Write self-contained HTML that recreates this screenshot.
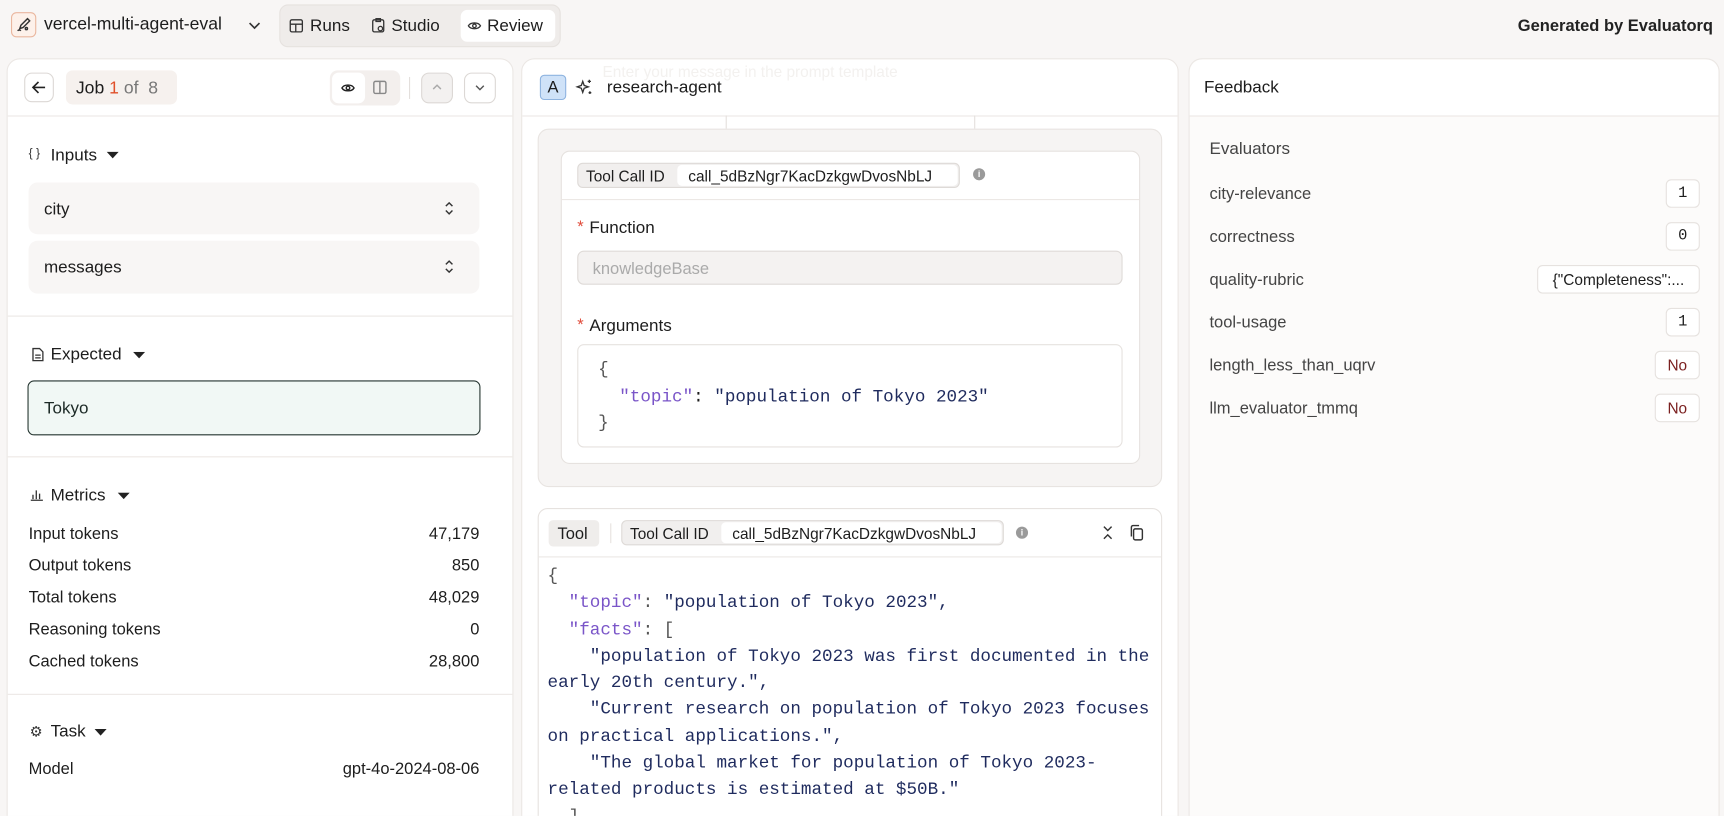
<!DOCTYPE html>
<html><head><meta charset="utf-8"><style>
*{box-sizing:border-box;margin:0;padding:0}
html,body{width:1724px;height:816px;overflow:hidden;background:#f8f6f5}
#w{position:absolute;left:0;top:0;width:1568px;height:742px;overflow:hidden;transform:scale(1.0995);transform-origin:0 0;font-family:"Liberation Sans",sans-serif;color:#1d1d1d;font-size:15px}
.a{position:absolute}
.mono{font-family:"Liberation Mono",monospace}
.panel{position:absolute;background:#fff;border:1px solid #ebe7e4;border-radius:12px}
.hline{position:absolute;height:1px;background:#ece8e5}
.t{position:absolute;line-height:1;white-space:nowrap}
.btn{position:absolute;border:1px solid #dcd8d5;border-radius:7px;background:#fff}
.k{color:#7a55c8}.s{color:#1f2b5e}.p{color:#555}
.badge{position:absolute;border:1px solid #e6e2df;border-radius:5px;background:#fff;height:26px;font-size:14px;line-height:24px;text-align:center}
.info{position:absolute;width:11px;height:11px;border-radius:50%;background:#9a9a9a;color:#fff;font-size:8px;line-height:11px;text-align:center;font-weight:bold}
</style></head><body><div id="w">
<!-- top bar -->
<div class="a" style="left:10px;top:11px;width:23px;height:23px;border:1px solid #eab79f;background:#fdf1ea;border-radius:5px"></div>
<svg class="a" style="left:13px;top:14px" width="17" height="17" viewBox="0 0 17 17" fill="none" stroke="#333" stroke-width="1.3"><path d="M12 3l2 2-6 6-3 1 1-3z"/><path d="M3 14c1-1 2-1 3 0"/><circle cx="11" cy="12" r="1"/></svg>
<div class="t" style="left:40px;top:15px;font-size:16px">vercel-multi-agent-eval</div>
<svg class="a" style="left:225px;top:17px" width="13" height="12" viewBox="0 0 13 12"><path d="M2 4l4.5 4.5L11 4" stroke="#333" stroke-width="1.5" fill="none"/></svg>
<div class="a" style="left:254px;top:4px;width:256px;height:39px;background:#efecea;border-radius:8px;border:1px solid #e6e2df"></div>
<svg class="a" style="left:263px;top:17px" width="13" height="13" viewBox="0 0 13 13" fill="none" stroke="#333" stroke-width="1.2"><rect x="1" y="1" width="11" height="11" rx="1.5"/><path d="M1 5h11M6 5v7"/></svg>
<div class="t" style="left:282px;top:16px;font-size:15.5px">Runs</div>
<svg class="a" style="left:338px;top:16px" width="12" height="14" viewBox="0 0 12 14" fill="none" stroke="#333" stroke-width="1.2"><rect x="1" y="2" width="10" height="11" rx="1.5"/><rect x="4" y="1" width="4" height="2.5"/><circle cx="8" cy="10" r="2"/></svg>
<div class="t" style="left:356px;top:16px;font-size:15.5px">Studio</div>
<div class="a" style="left:419px;top:9px;width:86px;height:29px;background:#fff;border-radius:6px"></div>
<svg class="a" style="left:425px;top:18px" width="13" height="11" viewBox="0 0 13 11" fill="none" stroke="#333" stroke-width="1.2"><path d="M1 5.5C3 2 10 2 12 5.5 10 9 3 9 1 5.5z"/><circle cx="6.5" cy="5.5" r="1.6"/></svg>
<div class="t" style="left:443px;top:16px;font-size:15.5px">Review</div>
<div class="t" style="right:10px;top:16px;font-size:15px;font-weight:bold;color:#222">Generated by Evaluatorq</div>

<!-- left panel -->
<div class="panel" style="left:6px;top:53px;width:461px;height:700px"></div>
<div class="hline" style="left:7px;top:105px;width:459px"></div>
<div class="btn" style="left:22px;top:66px;width:27px;height:27px"></div>
<svg class="a" style="left:28px;top:72px" width="15" height="15" viewBox="0 0 15 15" fill="none" stroke="#222" stroke-width="1.5"><path d="M13 7.5H2M7 2.5l-5 5 5 5"/></svg>
<div class="a" style="left:60px;top:64px;width:101px;height:31px;background:#f6f1ee;border-radius:6px"></div>
<div class="t" style="left:69px;top:73px;font-size:16px">Job <span style="color:#e0502a">1</span> <span style="color:#777">of&nbsp;&nbsp;8</span></div>
<div class="a" style="left:300px;top:64px;width:64px;height:32px;background:#f3efed;border-radius:7px"></div>
<div class="a" style="left:302px;top:66px;width:30px;height:28px;background:#fff;border-radius:6px"></div>
<svg class="a" style="left:310px;top:75px" width="13" height="10" viewBox="0 0 13 10" fill="none" stroke="#222" stroke-width="1.3"><path d="M1 5C3 1.5 10 1.5 12 5 10 8.5 3 8.5 1 5z"/><circle cx="6.5" cy="5" r="1.6"/></svg>
<svg class="a" style="left:339px;top:73px" width="13" height="13" viewBox="0 0 13 13" fill="none" stroke="#888" stroke-width="1.3"><rect x="1" y="1" width="11" height="11" rx="1.5"/><path d="M6.5 1v11"/></svg>
<div class="a" style="left:372px;top:70px;width:1px;height:20px;background:#e3dfdc"></div>
<div class="btn" style="left:383px;top:66px;width:29px;height:28px;background:#f3f1f0"></div>
<svg class="a" style="left:392px;top:75px" width="11" height="8" viewBox="0 0 11 8"><path d="M2 6l3.5-3.5L9 6" stroke="#aaa" stroke-width="1.3" fill="none"/></svg>
<div class="btn" style="left:422px;top:66px;width:29px;height:28px"></div>
<svg class="a" style="left:431px;top:76px" width="11" height="8" viewBox="0 0 11 8"><path d="M2 2l3.5 3.5L9 2" stroke="#555" stroke-width="1.3" fill="none"/></svg>

<div class="t" style="left:26px;top:135px;font-size:11px;color:#333">{ }</div>
<div class="t" style="left:46px;top:134px;font-size:15.5px">Inputs</div>
<svg class="a" style="left:97px;top:138px" width="11" height="7"><path d="M0 0h11L5.5 6z" fill="#222"/></svg>
<div class="a" style="left:26px;top:166px;width:410px;height:47px;background:#f8f6f5;border-radius:8px"></div>
<div class="t" style="left:40px;top:183px;font-size:15.5px">city</div>
<svg class="a" style="left:404px;top:183px" width="9" height="13" viewBox="0 0 9 13" fill="none" stroke="#333" stroke-width="1.3"><path d="M1.5 4.5L4.5 1.5 7.5 4.5M1.5 8.5l3 3 3-3"/></svg>
<div class="a" style="left:26px;top:219px;width:410px;height:48px;background:#f8f6f5;border-radius:8px"></div>
<div class="t" style="left:40px;top:236px;font-size:15.5px">messages</div>
<svg class="a" style="left:404px;top:236px" width="9" height="13" viewBox="0 0 9 13" fill="none" stroke="#333" stroke-width="1.3"><path d="M1.5 4.5L4.5 1.5 7.5 4.5M1.5 8.5l3 3 3-3"/></svg>
<div class="hline" style="left:7px;top:287px;width:459px"></div>
<svg class="a" style="left:29px;top:316px" width="11" height="13" viewBox="0 0 11 13" fill="none" stroke="#333" stroke-width="1.2"><path d="M1 1h6l3 3v8H1z"/><path d="M3 7h5M3 9.5h5"/></svg>
<div class="t" style="left:46px;top:315px;font-size:15.5px">Expected</div>
<svg class="a" style="left:121px;top:320px" width="11" height="7"><path d="M0 0h11L5.5 6z" fill="#222"/></svg>
<div class="a" style="left:25px;top:346px;width:412px;height:50px;background:#f1f8f5;border:1.5px solid #253530;border-radius:6px"></div>
<div class="t" style="left:40px;top:364px;font-size:15.5px;color:#1c2a26">Tokyo</div>
<div class="hline" style="left:7px;top:415px;width:459px"></div>
<svg class="a" style="left:27px;top:444px" width="13" height="12" viewBox="0 0 13 12" fill="none" stroke="#333" stroke-width="1.2"><path d="M1 11h11M3 10V6M6 10V2M9 10V5"/></svg>
<div class="t" style="left:46px;top:443px;font-size:15.5px">Metrics</div>
<svg class="a" style="left:107px;top:448px" width="11" height="7"><path d="M0 0h11L5.5 6z" fill="#222"/></svg>
<div class="t" style="left:26px;top:478px">Input tokens</div><div class="t" style="right:1132px;top:478px">47,179</div>
<div class="t" style="left:26px;top:507px">Output tokens</div><div class="t" style="right:1132px;top:507px">850</div>
<div class="t" style="left:26px;top:536px">Total tokens</div><div class="t" style="right:1132px;top:536px">48,029</div>
<div class="t" style="left:26px;top:565px">Reasoning tokens</div><div class="t" style="right:1132px;top:565px">0</div>
<div class="t" style="left:26px;top:594px">Cached tokens</div><div class="t" style="right:1132px;top:594px">28,800</div>
<div class="hline" style="left:7px;top:631px;width:459px"></div>
<div class="t" style="left:27px;top:659px;font-size:13px;color:#333">⚙</div>
<div class="t" style="left:46px;top:658px;font-size:15.5px">Task</div>
<svg class="a" style="left:86px;top:663px" width="11" height="7"><path d="M0 0h11L5.5 6z" fill="#222"/></svg>
<div class="t" style="left:26px;top:692px">Model</div><div class="t" style="right:1132px;top:692px">gpt-4o-2024-08-06</div>

<!-- middle panel -->
<div class="panel" style="left:474px;top:53px;width:598px;height:700px"></div>
<div class="t" style="left:548px;top:58px;font-size:14px;color:#f3f1ef">Enter your message in the prompt template</div>
<div class="hline" style="left:475px;top:105px;width:596px"></div>
<div class="a" style="left:660px;top:105px;width:1px;height:12px;background:#e4e0dd"></div>
<div class="a" style="left:886px;top:105px;width:1px;height:12px;background:#e4e0dd"></div>
<div class="a" style="left:491px;top:68px;width:24px;height:23px;background:#cfe2f8;border:1px solid #8fb4e0;border-radius:4px;font-size:15px;text-align:center;line-height:21px">A</div>
<svg class="a" style="left:523px;top:71px" width="17" height="17" viewBox="0 0 17 17" fill="none" stroke="#333" stroke-width="1.2"><path d="M7 3l1.3 3.7L12 8l-3.7 1.3L7 13l-1.3-3.7L2 8l3.7-1.3z"/><path d="M13 1.5v3M11.5 3h3M13.5 12v2.5M12.3 13.3h2.5"/></svg>
<div class="t" style="left:552px;top:72px;font-size:15.5px">research-agent</div>

<div class="a" style="left:489px;top:117px;width:568px;height:326px;background:#f6f4f3;border:1px solid #e8e4e1;border-radius:10px"></div>
<div class="a" style="left:510px;top:137px;width:527px;height:285px;background:#fff;border:1px solid #e6e2df;border-radius:8px"></div>
<div class="a" style="left:525px;top:148px;width:348px;height:23px;background:#f1efee;border:1px solid #dedad7;border-radius:5px"></div>
<div class="a" style="left:616px;top:150px;width:255px;height:19px;background:#fff;border-radius:4px"></div>
<div class="t" style="left:533px;top:153px;font-size:14px">Tool Call ID</div>
<div class="t" style="left:626px;top:153px;font-size:14px">call_5dBzNgr7KacDzkgwDvosNbLJ</div>
<div class="info" style="left:885px;top:153px">i</div>
<div class="hline" style="left:511px;top:181px;width:525px"></div>
<div class="t" style="left:525px;top:199px;color:#e04b3a">*</div>
<div class="t" style="left:536px;top:200px;font-size:15.5px">Function</div>
<div class="a" style="left:525px;top:228px;width:496px;height:31px;background:#f4f2f1;border:1px solid #dedad7;border-radius:6px"></div>
<div class="t" style="left:539px;top:237px;color:#aaa">knowledgeBase</div>
<div class="t" style="left:525px;top:288px;color:#e04b3a">*</div>
<div class="t" style="left:536px;top:289px;font-size:15.5px">Arguments</div>
<div class="a" style="left:525px;top:313px;width:496px;height:94px;background:#fff;border:1px solid #e6e2df;border-radius:6px"></div>
<div class="t mono" style="left:544px;top:324px;font-size:16px;line-height:24.5px;white-space:pre"><span class="p">{</span>
  <span class="k">"topic"</span>: <span class="s">"population of Tokyo 2023"</span>
<span class="p">}</span></div>

<div class="a" style="left:489px;top:462px;width:568px;height:300px;background:#fff;border:1px solid #e6e2df;border-radius:9px"></div>
<div class="hline" style="left:490px;top:506px;width:566px"></div>
<div class="a" style="left:499px;top:473px;width:46px;height:24px;background:#efedeb;border-radius:4px"></div>
<div class="t" style="left:507px;top:478px;font-size:15px">Tool</div>
<div class="a" style="left:555px;top:476px;width:1px;height:18px;background:#e6e2df"></div>
<div class="a" style="left:565px;top:473px;width:348px;height:23px;background:#f1efee;border:1px solid #dedad7;border-radius:5px"></div>
<div class="a" style="left:656px;top:475px;width:255px;height:19px;background:#fff;border-radius:4px"></div>
<div class="t" style="left:573px;top:478px;font-size:14px">Tool Call ID</div>
<div class="t" style="left:666px;top:478px;font-size:14px">call_5dBzNgr7KacDzkgwDvosNbLJ</div>
<div class="info" style="left:924px;top:479px">i</div>
<svg class="a" style="left:1002px;top:478px" width="11" height="13" viewBox="0 0 11 13" fill="none" stroke="#333" stroke-width="1.3"><path d="M2 1l3.5 3.5L9 1M2 12l3.5-3.5L9 12"/></svg>
<svg class="a" style="left:1027px;top:477px" width="14" height="15" viewBox="0 0 14 15" fill="none" stroke="#333" stroke-width="1.3"><rect x="4" y="4" width="8" height="10" rx="1.5"/><path d="M2 11V2.5A1.5 1.5 0 0 1 3.5 1H9"/></svg>
<div class="t mono" style="left:498px;top:512px;font-size:16px;line-height:24.3px;white-space:pre;color:#1f2b5e"><span class="p">{</span>
  <span class="k">"topic"</span><span class="p">:</span> "population of Tokyo 2023",
  <span class="k">"facts"</span><span class="p">: [</span>
    "population of Tokyo 2023 was first documented in the
early 20th century.",
    "Current research on population of Tokyo 2023 focuses
on practical applications.",
    "The global market for population of Tokyo 2023-
related products is estimated at $50B."
  <span class="p">]</span></div>

<!-- right panel -->
<div class="panel" style="left:1081px;top:53px;width:483px;height:700px;background:#fcfbfa"></div>
<div class="a" style="left:1082px;top:54px;width:481px;height:51px;background:#fff;border-radius:12px 12px 0 0"></div>
<div class="hline" style="left:1082px;top:105px;width:481px"></div>
<div class="t" style="left:1095px;top:72px;font-size:15.5px">Feedback</div>
<div class="t" style="left:1100px;top:128px;font-size:15.5px;color:#444">Evaluators</div>
<div class="t" style="left:1100px;top:169px;color:#444">city-relevance</div>
<div class="badge mono" style="left:1515px;top:163px;width:31px">1</div>
<div class="t" style="left:1100px;top:208px;color:#444">correctness</div>
<div class="badge mono" style="left:1515px;top:202px;width:31px">0</div>
<div class="t" style="left:1100px;top:247px;color:#444">quality-rubric</div>
<div class="badge" style="left:1398px;top:241px;width:148px;font-size:14px">{"Completeness":...</div>
<div class="t" style="left:1100px;top:286px;color:#444">tool-usage</div>
<div class="badge mono" style="left:1515px;top:280px;width:31px">1</div>
<div class="t" style="left:1100px;top:325px;color:#444">length_less_than_uqrv</div>
<div class="badge" style="left:1505px;top:319px;width:41px;color:#7a1f1f">No</div>
<div class="t" style="left:1100px;top:364px;color:#444">llm_evaluator_tmmq</div>
<div class="badge" style="left:1505px;top:358px;width:41px;color:#7a1f1f">No</div>
</div></body></html>
